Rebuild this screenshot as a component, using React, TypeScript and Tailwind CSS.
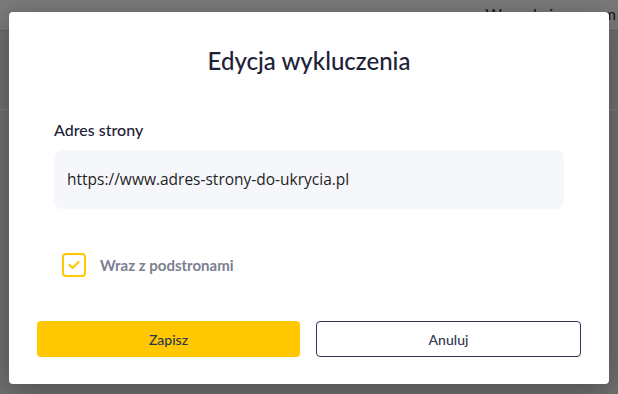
export default function App() {
  return (
    <div className="relative h-[394px] w-[618px] overflow-hidden bg-[#6f6f6f] font-['Lato',sans-serif]">
      {/* page behind the overlay */}
      <div className="flex h-[31px] items-start justify-end border-b border-[#646464] bg-[#7a7a7a]">
        <span className="mr-[2px] mt-[4px] whitespace-nowrap text-[16px] font-medium leading-[20px] text-[#1a1a1a]">Wyszukaj program</span>
      </div>
      <div className="mt-[78px] border-b border-[#7d7d7d]" />

      {/* modal */}
      <div className="absolute left-[9px] top-[12px] flex h-[372px] w-[600px] flex-col rounded-[4px] bg-white px-[28px] shadow-[0_6px_28px_rgba(0,0,0,0.3)]">
        <h1 className="mt-[35px] text-center text-[24px] font-medium leading-[28px] text-[#1e2238]">Edycja wykluczenia</h1>

        <div className="mt-[45px] flex flex-col px-[17px]">
          <label className="text-[16px] font-medium leading-[20px] text-[#1e2238]">Adres strony</label>
          <div className="mt-[10px] flex h-[59px] items-center rounded-[8px] bg-[#f6f7fb] px-[13px]">
            <span className="font-['Open_Sans',sans-serif] text-[15.5px] font-medium text-[#1f1f1f]">https://www.adres-strony-do-ukrycia.pl</span>
          </div>

          <div className="ml-[8px] mt-[44px] flex items-center gap-[14px]">
            <div className="flex h-[24px] w-[24px] items-center justify-center rounded-[4px] border-2 border-[#ffc800]">
              <svg width="14" height="14" viewBox="0 0 14 14" fill="none">
                <path d="M2.5 7 L5.6 10 L11.5 4" stroke="#ffc800" strokeWidth="2.2" strokeLinecap="round" strokeLinejoin="round" />
              </svg>
            </div>
            <span className="text-[15px] font-bold text-[#7c8090]">Wraz z podstronami</span>
          </div>
        </div>

        <div className="mt-[44px] flex gap-[16px]">
          <button type="button" className="h-[36px] flex-1 rounded-[4px] bg-[#ffc800] text-[14px] font-medium text-[#2f3552]">
            Zapisz
          </button>
          <button type="button" className="h-[36px] flex-1 rounded-[4px] border border-[#2f3552] bg-white text-[14px] font-medium text-[#2f3552]">
            Anuluj
          </button>
        </div>
      </div>
    </div>
  );
}
